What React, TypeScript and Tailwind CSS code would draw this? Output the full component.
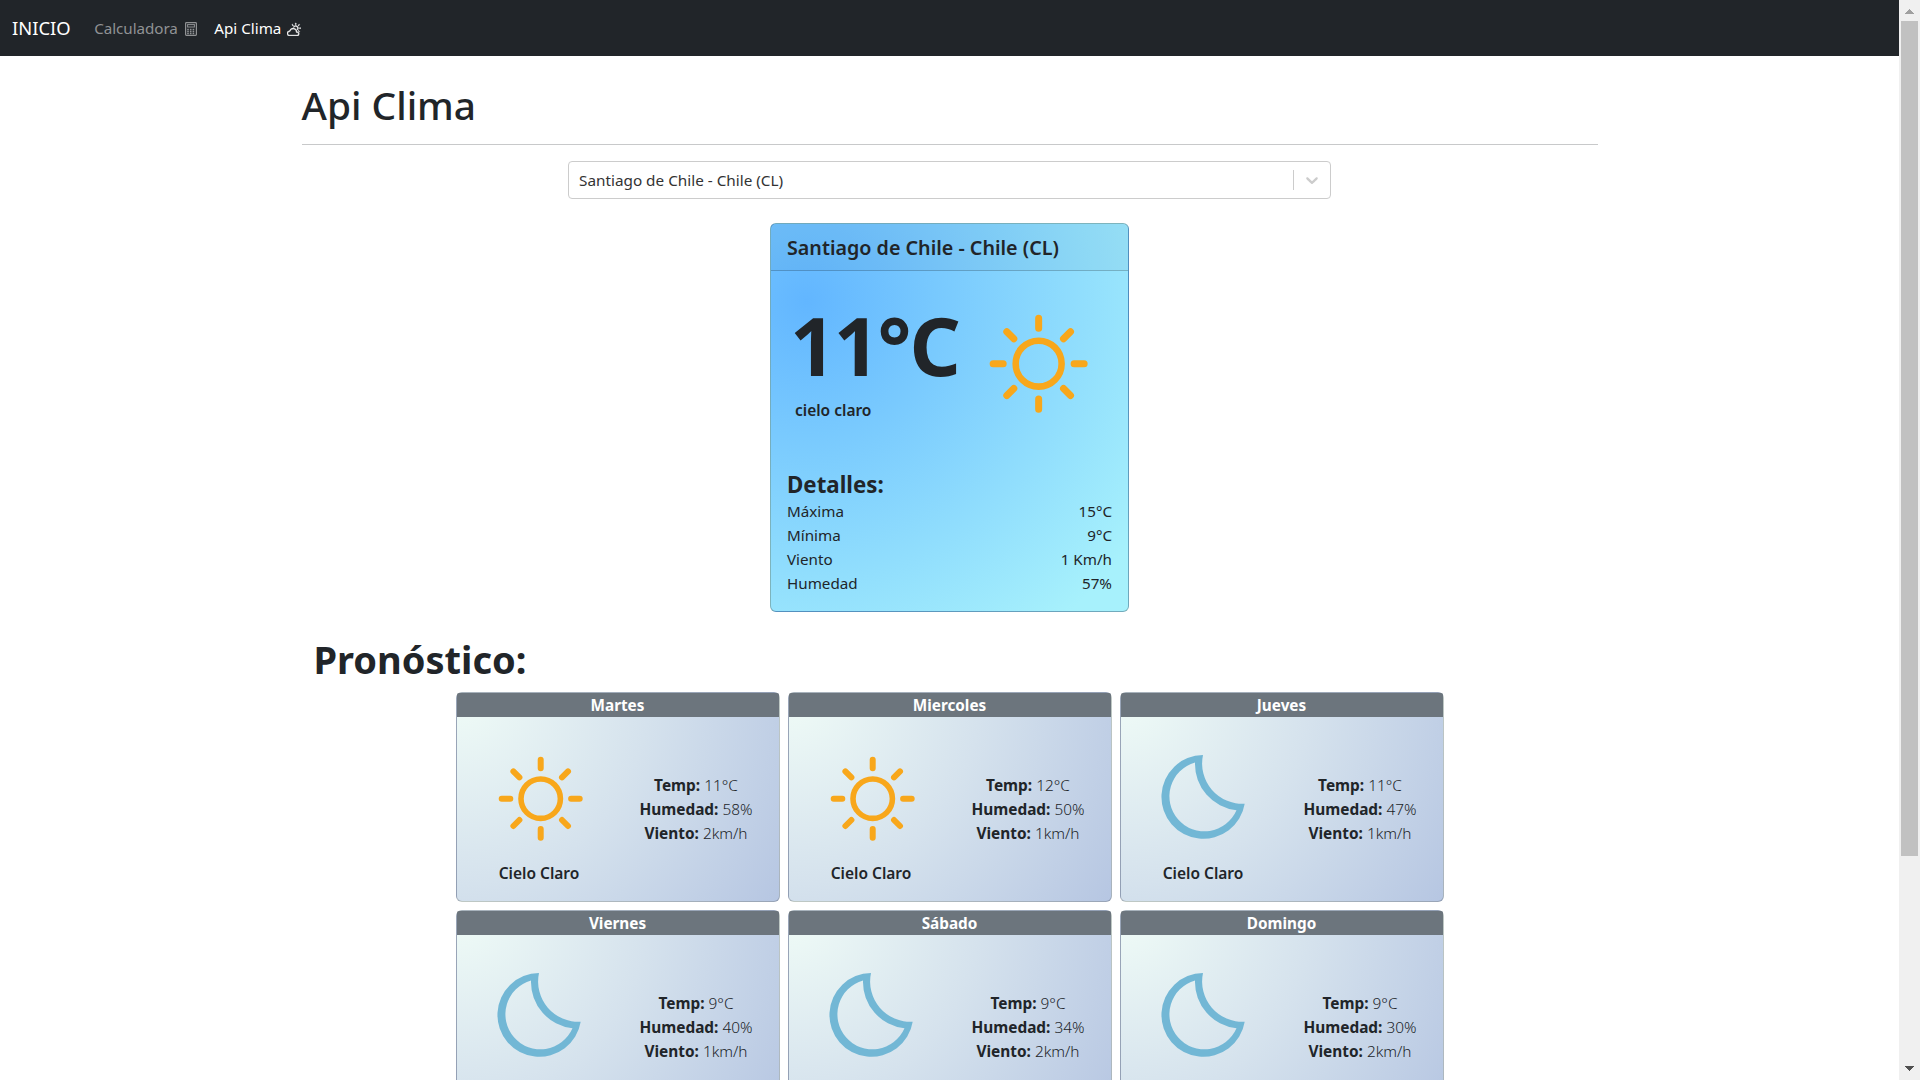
import React from "react";
import { BsCloudSun } from "react-icons/bs";

type Forecast = { day: string; icon: "sun" | "moon"; temp: number; hum: number; wind: number };

const forecasts: Forecast[] = [
  { day: "Martes", icon: "sun", temp: 11, hum: 58, wind: 2 },
  { day: "Miercoles", icon: "sun", temp: 12, hum: 50, wind: 1 },
  { day: "Jueves", icon: "moon", temp: 11, hum: 47, wind: 1 },
  { day: "Viernes", icon: "moon", temp: 9, hum: 40, wind: 1 },
  { day: "Sábado", icon: "moon", temp: 9, hum: 34, wind: 2 },
  { day: "Domingo", icon: "moon", temp: 9, hum: 30, wind: 2 },
];

const details = [
  ["Máxima", "15°C"],
  ["Mínima", "9°C"],
  ["Viento", "1 Km/h"],
  ["Humedad", "57%"],
];

function SunIcon({ className }: { className: string }) {
  return (
    <svg viewBox="0 0 120 120" className={className} fill="none" stroke="#f8a71b" strokeLinecap="round">
      <circle cx="59.7" cy="59.7" r="19.7" strokeWidth="5.6" />
      <path
        strokeWidth="6"
        d="M59.7 20.7v8.6M59.7 90.1v8.6M20.7 59.7h8.6M90.1 59.7h8.6M32.4 32.4l6 6M87 32.4l-6 6M32.4 87l6-6M87 87l-6-6"
      />
    </svg>
  );
}

function MoonIcon({ className }: { className: string }) {
  return (
    <svg viewBox="0 0 120 120" className={className} fill="#72b7d5" fillRule="evenodd">
      <path d="M58 16A41.9 41.9 0 1 0 99.7 64.7A40.3 40.3 0 0 1 58 16ZM50 23.6A35 35 0 1 0 91.5 71.3A46.6 46.6 0 0 1 50 23.6Z" />
    </svg>
  );
}

function CalculatorIcon() {
  return (
    <svg viewBox="0 0 12 14" className="mt-[3px] h-3.5 w-3" fill="none" stroke="currentColor">
      <rect x="0.6" y="0.6" width="10.8" height="12.8" rx="0.8" strokeWidth="1.2" />
      <rect x="2.6" y="2.6" width="6.8" height="2.4" strokeWidth="1" />
      <path strokeWidth="1.5" strokeDasharray="1.6 1.1" d="M2.2 7.4h8M2.2 9.6h8M2.2 11.5h8" />
    </svg>
  );
}

function Navbar() {
  return (
    <nav className="flex h-14 items-center bg-[#212529] pl-3 text-[15.2px]">
      <a className="mr-[23.5px] text-[18.4px] leading-[30px] text-white">INICIO</a>
      <a className="mr-[17.5px] flex items-center gap-[7px] text-[#909294]">
        <span className="tracking-[-0.05px]">Calculadora</span> <CalculatorIcon />
      </a>
      <a className="flex items-center gap-1.5 text-white">
        Api Clima <BsCloudSun className="mt-[3px] size-3.5" stroke="currentColor" strokeWidth="0.5" />
      </a>
    </nav>
  );
}

function CitySelect() {
  return (
    <div className="mx-auto flex h-[38px] w-[763px] items-center rounded border border-[#cccccc] bg-white">
      <span className="flex-1 pl-2.5 text-[15.3px] text-[#333333]">Santiago de Chile - Chile (CL)</span>
      <span className="h-5 w-px bg-[#cccccc]" />
      <span className="p-2 text-[#cccccc]">
        <svg viewBox="0 0 20 20" className="size-5 fill-current">
          <path d="M4.516 7.548c0.436-0.446 1.043-0.481 1.576 0l3.908 3.747 3.908-3.747c0.533-0.481 1.141-0.446 1.574 0 0.436 0.445 0.408 1.197 0 1.615-0.406 0.418-4.695 4.502-4.695 4.502-0.217 0.223-0.502 0.335-0.787 0.335s-0.57-0.112-0.789-0.335c0 0-4.287-4.084-4.695-4.502s-0.436-1.17 0-1.615z" />
        </svg>
      </span>
    </div>
  );
}

function CurrentCard() {
  return (
    <div className="mx-auto mt-6 h-[389px] w-[359px] rounded-md border border-black/[.25] bg-[radial-gradient(circle_at_10%_20%,#62b6ff_0%,#a7f1fc_91%)]">
      <div className="flex h-[47px] items-center rounded-t-md border-b border-black/[.2] bg-black/[.03] px-4 pt-[2px] text-[19.7px] font-semibold">
        Santiago de Chile - Chile (CL)
      </div>
      <div className="flex h-[199px] pl-6">
        <div className="w-[169px]">
          <div className="mt-5 -ml-[5px] h-[107px] text-[80px] leading-[108px] font-bold tracking-[-2px] whitespace-nowrap">
            11°C
          </div>
          <div className="text-[15.5px] leading-6 font-semibold">cielo claro</div>
        </div>
        <SunIcon className="mt-[23px] ml-[5px] size-[140px] shrink-0" />
      </div>
      <div className="px-4">
        <h4 className="h-[29px] text-[22.3px] leading-[30px] font-bold">Detalles:</h4>
        {details.map(([label, value]) => (
          <div key={label} className="flex justify-between text-[15.2px] leading-6">
            <span>{label}</span>
            <span>{value}</span>
          </div>
        ))}
      </div>
    </div>
  );
}

function ForecastCard({ f }: { f: Forecast }) {
  const Icon = f.icon === "sun" ? SunIcon : MoonIcon;
  return (
    <div className="h-[210px] w-[324px] rounded-md border border-black/[.2] bg-[radial-gradient(circle_at_0%_0%,#f0fcf7_0%,#d5e2ed_50%,#b6c6e2_100%)]">
      <div className="h-6 rounded-t-[2px] bg-[#6c757d] text-center text-[15.3px] leading-6 font-bold text-white">{f.day}</div>
      <div className="flex">
        <div className="w-[168px]">
          <Icon className="mt-[22px] ml-6 size-[120px]" />
          <div className="mt-1 -ml-[3px] text-center text-[15.5px] leading-5 font-semibold">Cielo Claro</div>
        </div>
        <div className="mt-[57px] w-[143px] text-center text-[15.4px] leading-6 font-light">
          <div><b className="font-bold">Temp:</b> {f.temp}°C</div>
          <div><b className="font-bold">Humedad:</b> {f.hum}%</div>
          <div><b className="font-bold">Viento:</b> {f.wind}km/h</div>
        </div>
      </div>
    </div>
  );
}

function Scrollbar() {
  return (
    <div className="flex h-full w-[21px] flex-col items-center bg-[#f0f0f0]">
      <svg className="mt-[9px] h-[5px] w-[9px]" viewBox="0 0 9 5" shapeRendering="crispEdges">
        <path d="M0 5L4.5 0L9 5z" fill="#a0a0a0" />
      </svg>
      <div className="mt-[7px] h-[835px] w-[17px] bg-[#c1c1c1]" />
      <svg className="mt-auto mb-[9px] h-[5px] w-[9px]" viewBox="0 0 9 5" shapeRendering="crispEdges">
        <path d="M0 0L4.5 5L9 0z" fill="#505050" />
      </svg>
    </div>
  );
}

export default function App() {
  return (
    <div className="flex h-[1080px] w-[1920px] overflow-hidden bg-white font-['Noto_Sans','Open_Sans',sans-serif] text-[#212529]">
      <div className="w-[1899px] overflow-hidden">
        <Navbar />
        <main className="mx-auto w-[1296px] pt-[23px]">
          <h1 className="h-[65px] text-[38.8px] leading-[52px] font-medium">Api Clima</h1>
          <hr className="mb-4 border-[#c8c9ca]" />
          <CitySelect />
          <CurrentCard />
          <h1 className="mt-[23px] h-[57px] pl-3 text-[38px] leading-12 font-bold">Pronóstico:</h1>
          <div className="mx-auto grid w-[988px] grid-cols-3 gap-2">
            {forecasts.map((f) => (
              <ForecastCard key={f.day} f={f} />
            ))}
          </div>
        </main>
      </div>
      <Scrollbar />
    </div>
  );
}
